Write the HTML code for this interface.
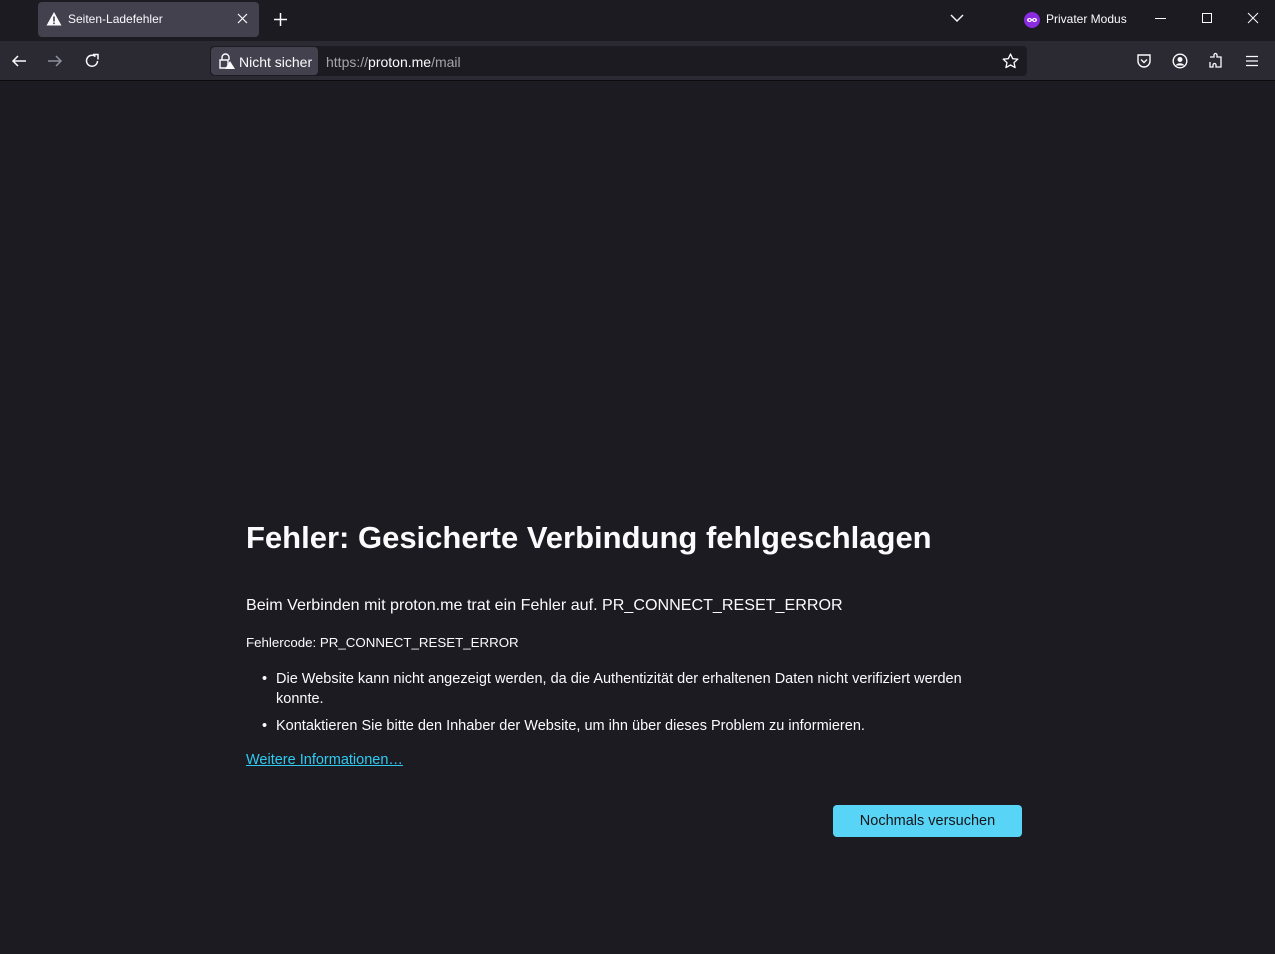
<!DOCTYPE html>
<html><head><meta charset="utf-8"><style>
*{margin:0;padding:0;box-sizing:border-box}
body{width:1275px;height:954px;background:#1c1b22;font-family:"Liberation Sans",sans-serif;color:#fbfbfe;position:relative;overflow:hidden}
.abs{position:absolute}
#titlebar{left:0;top:0;width:1275px;height:41px;background:#1c1b22}
#tab{left:38px;top:2px;width:221px;height:35px;background:#42414d;border-radius:4px}
#toolbar{left:0;top:41px;width:1275px;height:40px;background:#2b2a33;border-bottom:1px solid #0c0c0d}
#url{left:210px;top:46px;width:817px;height:30px;background:#1c1b22;border-radius:4px}
#ns{left:211px;top:47px;width:107px;height:28px;background:#42414d;border-radius:4px}
.t{font-size:13px;white-space:nowrap}
svg{position:absolute}
</style></head><body>
<div id="titlebar" class="abs"></div>
<div id="tab" class="abs"></div>
<svg style="left:46px;top:11px" width="16" height="16" viewBox="0 0 16 16"><path d="M8 1 L15.5 14.5 H0.5 Z" fill="#fbfbfe"/><rect x="7.2" y="5.5" width="1.6" height="5" fill="#42414d"/><rect x="7.2" y="11.5" width="1.6" height="1.6" fill="#42414d"/></svg>
<div class="abs t" style="left:68px;top:12px;font-size:12px">Seiten-Ladefehler</div>
<svg style="left:237px;top:13px" width="11" height="11"><path d="M1 1L10 10M10 1L1 10" stroke="#fbfbfe" stroke-width="1.2"/></svg>
<svg style="left:273px;top:12px" width="15" height="15"><path d="M7.5 1V14M1 7.5H14" stroke="#fbfbfe" stroke-width="1.5"/></svg>
<svg style="left:950px;top:13px" width="14" height="10"><path d="M1 2L7 8L13 2" stroke="#fbfbfe" stroke-width="1.4" fill="none"/></svg>
<svg style="left:1024px;top:12px" width="16" height="16"><circle cx="8" cy="8" r="8" fill="#8a2be2"/><ellipse cx="5.5" cy="8" rx="2.5" ry="2" fill="#fff"/><ellipse cx="10.5" cy="8" rx="2.5" ry="2" fill="#fff"/><circle cx="5.5" cy="8" r="1" fill="#8a2be2"/><circle cx="10.5" cy="8" r="1" fill="#8a2be2"/></svg>
<div class="abs t" style="left:1046px;top:12px;font-size:12px">Privater Modus</div>
<svg style="left:1155px;top:12px" width="12" height="12"><path d="M0 6.5H11" stroke="#fbfbfe"/></svg>
<svg style="left:1201px;top:12px" width="12" height="12"><rect x="1.5" y="1.5" width="9" height="9" stroke="#fbfbfe" fill="none"/></svg>
<svg style="left:1247px;top:12px" width="12" height="12"><path d="M1 1L11 11M11 1L1 11" stroke="#fbfbfe"/></svg>
<div id="toolbar" class="abs"></div>
<svg style="left:11px;top:53px" width="16" height="16"><path d="M15 8H2M7 3L2 8L7 13" stroke="#fbfbfe" stroke-width="1.5" fill="none"/></svg>
<svg style="left:47px;top:53px" width="16" height="16"><path d="M1 8H14M9 3L14 8L9 13" stroke="#8f8f9d" stroke-width="1.5" fill="none"/></svg>
<svg style="left:84px;top:53px" width="16" height="16"><path d="M13.5 8A5.5 5.5 0 1 1 11.5 3.5" stroke="#fbfbfe" stroke-width="1.5" fill="none"/><path d="M9 1.5H14V6.5" stroke="#fbfbfe" stroke-width="1.5" fill="none"/></svg>
<div id="url" class="abs"></div>
<div id="ns" class="abs"></div>
<svg style="left:218px;top:53px" width="18" height="17"><path d="M4 7V4.5a3.5 3.5 0 0 1 7 0V7" stroke="#fbfbfe" stroke-width="1.4" fill="none"/><path d="M2 7H10V15H2Z" stroke="#fbfbfe" stroke-width="1.4" fill="none"/><path d="M12 8L17 16H7Z" fill="#fbfbfe"/></svg>
<div class="abs t" style="left:239px;top:54px;font-size:14px">Nicht sicher</div>
<div class="abs t" style="left:326px;top:54px;font-size:14px;color:#a5a4ab">https://<span style="color:#fbfbfe">proton.me</span>/mail</div>
<svg style="left:1002px;top:53px" width="17" height="16"><path d="M8.5 1L10.7 5.7L15.8 6.2L12 9.6L13.1 14.6L8.5 12L3.9 14.6L5 9.6L1.2 6.2L6.3 5.7Z" stroke="#fbfbfe" stroke-width="1.3" fill="none" stroke-linejoin="round"/></svg>
<svg style="left:1136px;top:53px" width="16" height="16"><path d="M2 2H14V8A6 6 0 0 1 2 8Z" stroke="#fbfbfe" stroke-width="1.4" fill="none"/><path d="M5 6.5L8 9.5L11 6.5" stroke="#fbfbfe" stroke-width="1.4" fill="none"/></svg>
<svg style="left:1172px;top:53px" width="16" height="16"><circle cx="8" cy="8" r="6.8" stroke="#fbfbfe" stroke-width="1.4" fill="none"/><circle cx="8" cy="6.5" r="2.5" fill="#fbfbfe"/><path d="M3.5 12.5A5 4 0 0 1 12.5 12.5" fill="#fbfbfe"/></svg>
<svg style="left:1208px;top:52px" width="17" height="17"><path d="M2 5H6V3A1.5 1.5 0 0 1 9 3V5H13V15H8V13A1.5 1.5 0 0 0 5 13V15H2V10" stroke="#fbfbfe" stroke-width="1.3" fill="none"/></svg>
<svg style="left:1245px;top:54px" width="14" height="14"><path d="M1 2.5H13M1 7H13M1 11.5H13" stroke="#fbfbfe" stroke-width="1.3"/></svg>

<div class="abs" style="left:246px;top:520px;font-size:31px;font-weight:bold;white-space:nowrap">Fehler: Gesicherte Verbindung fehlgeschlagen</div>
<div class="abs" style="left:246px;top:596px;font-size:16.1px;white-space:nowrap">Beim Verbinden mit proton.me trat ein Fehler auf. PR_CONNECT_RESET_ERROR</div>
<div class="abs" style="left:246px;top:635px;font-size:13.3px;white-space:nowrap">Fehlercode: PR_CONNECT_RESET_ERROR</div>
<div class="abs" style="left:262px;top:669px;font-size:14.5px;line-height:20px">•</div>
<div class="abs" style="left:276px;top:669px;font-size:14.5px;line-height:20px;width:720px">Die Website kann nicht angezeigt werden, da die Authentizität der erhaltenen Daten nicht verifiziert werden konnte.</div>
<div class="abs" style="left:262px;top:716px;font-size:14.5px;line-height:20px">•</div>
<div class="abs" style="left:276px;top:716px;font-size:14.5px;line-height:20px;white-space:nowrap">Kontaktieren Sie bitte den Inhaber der Website, um ihn über dieses Problem zu informieren.</div>
<div class="abs" style="left:246px;top:752px;font-size:14.5px;color:#2fcaf0;text-decoration:underline;white-space:nowrap">Weitere Informationen…</div>
<div class="abs" style="left:833px;top:805px;width:189px;height:32px;background:#58d5f6;border-radius:4px;color:#15141a;font-size:14.5px;text-align:center;line-height:33px">Nochmals versuchen</div>
</body></html>
